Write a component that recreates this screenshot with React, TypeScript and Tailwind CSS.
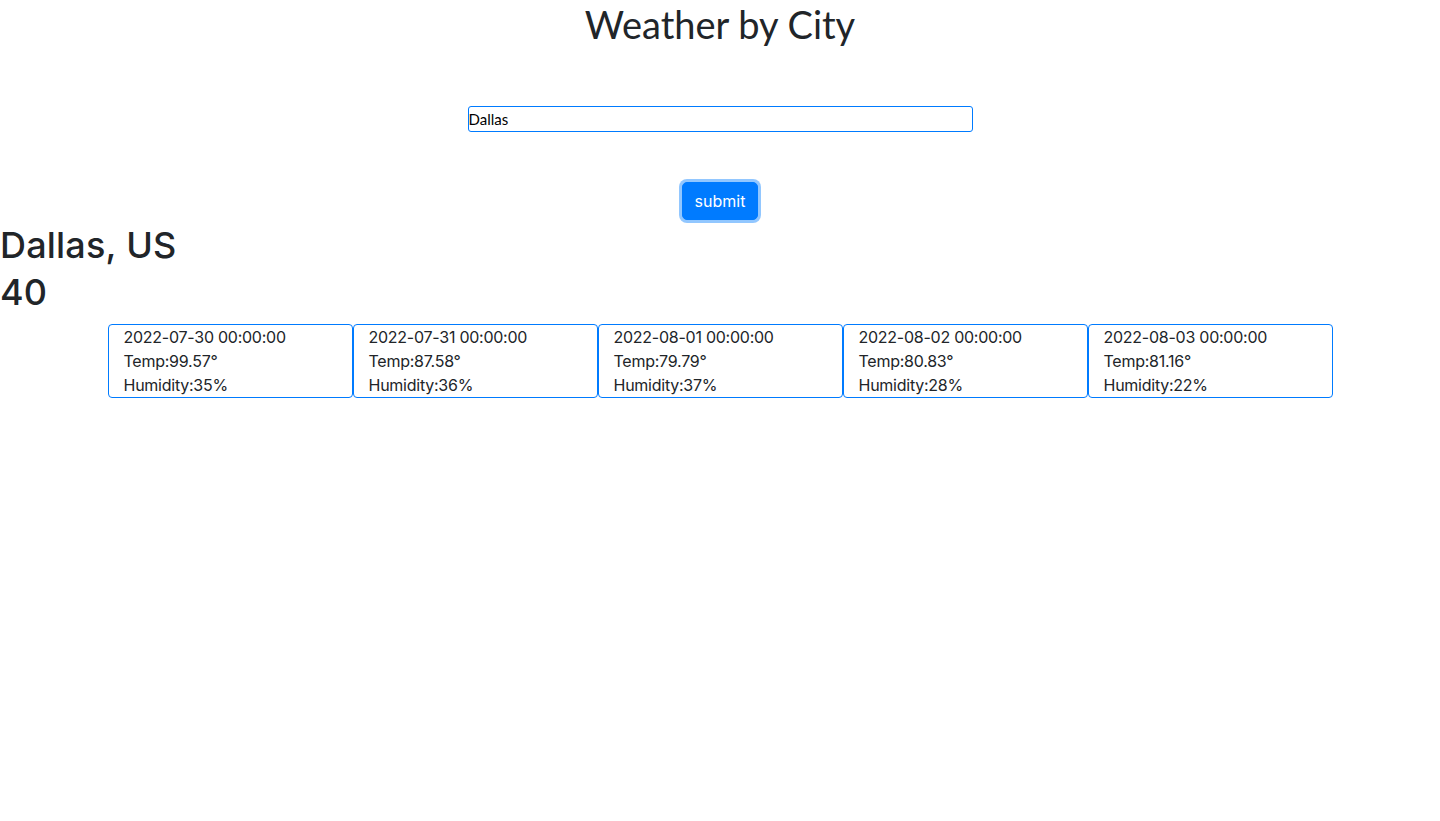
const forecast = [
  { date: "2022-07-30 00:00:00", temp: "99.57", humidity: "35" },
  { date: "2022-07-31 00:00:00", temp: "87.58", humidity: "36" },
  { date: "2022-08-01 00:00:00", temp: "79.79", humidity: "37" },
  { date: "2022-08-02 00:00:00", temp: "80.83", humidity: "28" },
  { date: "2022-08-03 00:00:00", temp: "81.16", humidity: "22" },
];

const ForecastCard = ({ day }: { day: (typeof forecast)[number] }) => {
  return (
    <div className="w-[245px] border border-[#007bff] rounded-[4px] px-[15px] text-[16px] leading-[24px] tracking-[-0.25px] text-[#212529]">
      <div>{day.date}</div>
      <div>Temp:{day.temp}°</div>
      <div>Humidity:{day.humidity}%</div>
    </div>
  );
};

export default function App() {
  return (
    <div className="min-h-screen bg-white text-[#212529] font-['Inter','Liberation_Sans',sans-serif]">
      {/* Header */}
      <h1 className="text-center text-[38px] leading-[48px] font-['Lato','Open_Sans',sans-serif] font-normal">
        Weather by City
      </h1>

      {/* Search form */}
      <div className="flex flex-col items-center">
        <input
          type="text"
          defaultValue="Dallas"
          className="mt-[58px] w-[505px] h-[26px] border border-[#007bff] rounded-[3px] px-0 text-[15px] text-black font-['Lato','Open_Sans',sans-serif] outline-none"
        />
        <button className="mt-[50px] px-[12px] py-[6px] text-[16px] leading-[24px] text-white bg-[#007bff] border border-[#007bff] rounded-[5px] shadow-[0_0_0_3px_rgba(38,143,255,0.5)]">
          submit
        </button>
      </div>

      {/* Current */}
      <div className="mt-[2px] text-[36px] leading-[47px] font-medium tracking-[0.2px]">
        <div>Dallas, US</div>
        <div>40</div>
      </div>

      {/* Forecast */}
      <div className="mt-[8px] flex justify-center">
        {forecast.map((day) => (
          <ForecastCard key={day.date} day={day} />
        ))}
      </div>
    </div>
  );
}
